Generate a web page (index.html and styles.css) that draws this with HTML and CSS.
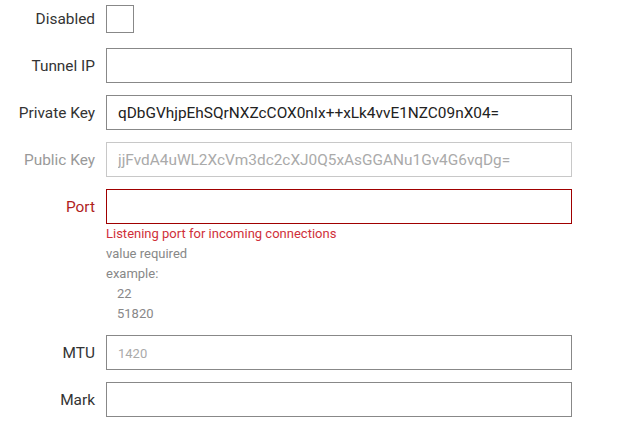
FILE: index.html
```html
<!DOCTYPE html>
<html>
<head>
<meta charset="utf-8">
<link rel="stylesheet" href="styles.css">
</head>
<body>
<form class="form">
  <div class="row row-check">
    <label class="label">Disabled</label>
    <span class="checkbox"></span>
  </div>
  <div class="row">
    <label class="label">Tunnel IP</label>
    <input class="field" type="text" value="">
  </div>
  <div class="row">
    <label class="label">Private Key</label>
    <input class="field" type="text" value="qDbGVhjpEhSQrNXZcCOX0nIx++xLk4vvE1NZC09nX04=">
  </div>
  <div class="row row-muted">
    <label class="label">Public Key</label>
    <input class="field" type="text" value="jjFvdA4uWL2XcVm3dc2cXJ0Q5xAsGGANu1Gv4G6vqDg=" readonly>
  </div>
  <div class="row row-error">
    <label class="label">Port</label>
    <input class="field" type="text" value="">
  </div>
  <div class="help">
    <div class="help-error">Listening port for incoming connections</div>
    <div>value required</div>
    <div>example:</div>
    <div class="help-ex">22</div>
    <div class="help-ex">51820</div>
  </div>
  <div class="row row-mtu">
    <label class="label">MTU</label>
    <input class="field" type="text" placeholder="1420">
  </div>
  <div class="row">
    <label class="label">Mark</label>
    <input class="field" type="text" value="">
  </div>
</form>
</body>
</html>
```
FILE: styles.css
```css
* { box-sizing: border-box; }
html, body { margin: 0; padding: 0; background: #fff; }
body {
  font-family: Roboto, "Liberation Sans", sans-serif;
  color: #333;
}
.form {
  display: flex;
  flex-direction: column;
  padding-top: 5px;
}
.row {
  display: flex;
  align-items: center;
  gap: 11px;
  margin-bottom: 12px;
}
.row-check { margin-bottom: 15px; }
.label {
  width: 95px;
  text-align: right;
  font-size: 15.4px;
  color: #333;
}
.checkbox {
  width: 28px;
  height: 28px;
  border: 1px solid #888;
  background: #fff;
}
.field {
  width: 466px;
  height: 35px;
  border: 1px solid #888;
  border-radius: 0;
  padding: 0 11px;
  font-family: Roboto, "Liberation Sans", sans-serif;
  font-size: 15.4px;
  color: #222;
  outline: none;
  background: #fff;
}
.field::placeholder { color: #aaa; font-size: 13px; }
.row-muted .label { color: #999; }
.row-muted .field { border-color: #c8c8c8; color: #aaa; }
.row-error { margin-bottom: 0; }
.row-error .label { color: #b01e1e; }
.row-error .field { border-color: #a00000; }
.help {
  margin-left: 106px;
  font-size: 13px;
  line-height: 20px;
  color: #888;
  margin-bottom: 11px;
}
.help-error { color: #d0303a; }
.help-ex { padding-left: 11px; }
```
